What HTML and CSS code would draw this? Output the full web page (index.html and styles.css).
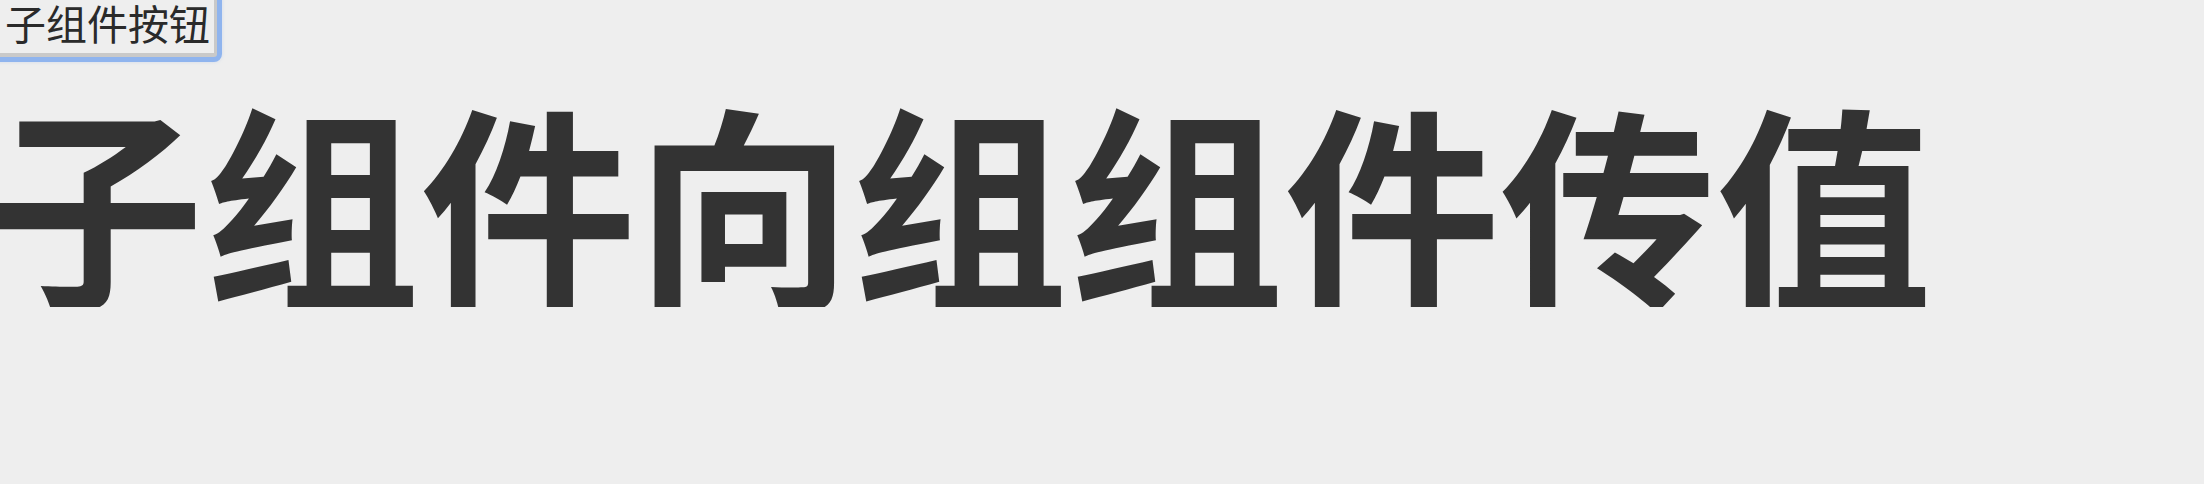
FILE: index.html
```html
<!DOCTYPE html>
<html lang="zh-CN">
<head>
<meta charset="utf-8">
<title>子组件向组件传值</title>
<link rel="stylesheet" href="styles.css">
</head>
<body>
<div class="page">
  <div class="child">
    <button class="child-btn" type="button">子组件按钮</button>
  </div>
  <h1 class="title">子组件向组组件传值</h1>
</div>
</body>
</html>
```

FILE: styles.css
```css
html, body {
  margin: 0;
  padding: 0;
  background: #eeeeee;
}

/* page content is scrolled a little past the top-left corner */
.page {
  margin: -12px 0 0 -12px;
  font-family: "Noto Sans CJK SC", "Noto Sans", sans-serif;
  color: #333333;
}

.child {
  display: flex;
}

/* focused button from the child component */
.child-btn {
  font-family: "Noto Sans CJK SC", "Noto Sans", sans-serif;
  font-size: 41px;
  line-height: 62px;
  color: #2a2a2a;
  background: #eeeeee;
  padding: 0 4px 0 14px;
  border: 3px solid #c9c9c9;
  border-bottom-width: 4px;
  border-top-color: #e0e0e0;
  border-left-color: #e0e0e0;
  border-radius: 3px;
  outline: 5px solid #8fb4ee;
  outline-offset: 0;
  box-shadow: 0 0 4px 4px rgba(120, 160, 230, 0.4);
}

.title {
  margin: 34px 0 0 0;
  font-size: 216px;
  line-height: 1;
  font-weight: 700;
}
```
